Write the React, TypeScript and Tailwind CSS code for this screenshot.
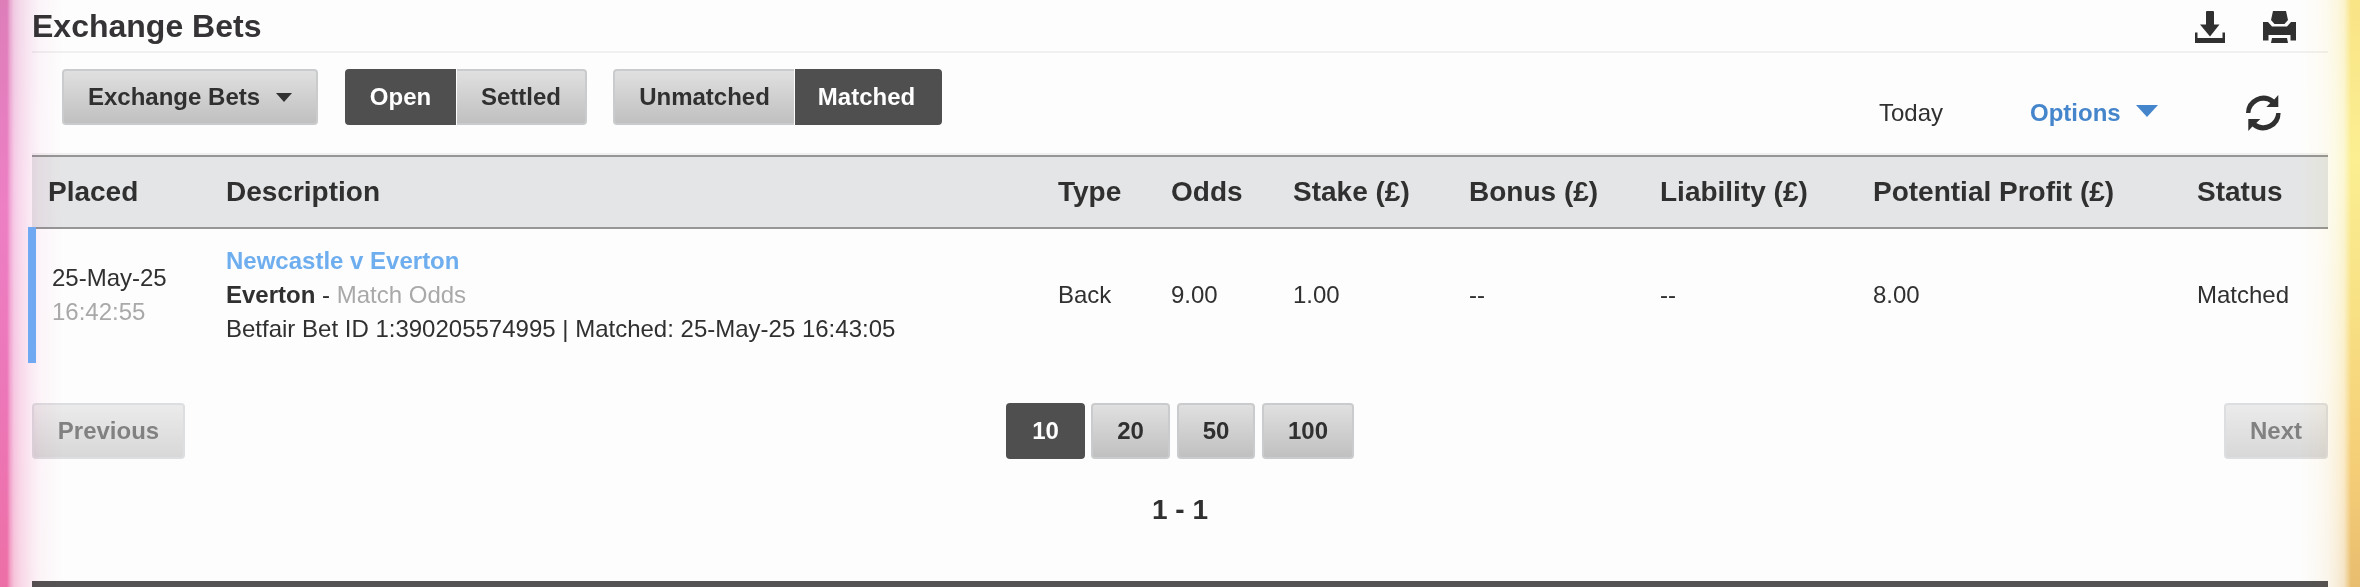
import clsx from "clsx";

const BUTTON = "flex h-14 items-center text-2xl font-bold";
const IDLE =
  "border-2 border-[#c9cbcd] bg-gradient-to-b from-[#e0e0e0] to-[#c0c0c0] text-[#303030]";
const ACTIVE = "bg-[#4f4f4f] text-white";

const COLUMNS =
  "grid grid-cols-[178px_832px_113px_122px_176px_191px_213px_324px_auto]";

const headers = [
  "Placed",
  "Description",
  "Type",
  "Odds",
  "Stake (£)",
  "Bonus (£)",
  "Liability (£)",
  "Potential Profit (£)",
  "Status",
];

const bet = {
  date: "25-May-25",
  time: "16:42:55",
  event: "Newcastle v Everton",
  selection: "Everton",
  market: "Match Odds",
  details: "Betfair Bet ID 1:390205574995 | Matched: 25-May-25 16:43:05",
  values: ["Back", "9.00", "1.00", "--", "--", "8.00", "Matched"],
};

const pageSizes = [
  { label: "10", className: "w-[79px]" },
  { label: "20", className: "ml-1.5 w-[79px]" },
  { label: "50", className: "ml-[7px] w-[78px]" },
  { label: "100", className: "ml-[7px] w-[92px]" },
];

function DownloadIcon() {
  return (
    <svg className="h-8 w-[30px]" viewBox="0 0 30 32" fill="#303030">
      <path d="M12 0h6q1 0 1 1v12.5h5.5L15 25.5 5 13.5h6V1q0-1 1-1z" />
      <path d="M0 21.5h2.5V27h25v-5.5H30V32H0z" />
    </svg>
  );
}

function PrintIcon() {
  return (
    <svg className="h-8 w-[33px]" viewBox="0 0 33 32" fill="#303030">
      <path d="M10 0h13l2 9-3.5 4h-10L8 9z" />
      <path d="M0 11h5l4 4.5h15l4-4.5h5v18.5h-5.5V24h-22v5.5H0z" />
      <path d="M9 27h15l1 5H8z" />
    </svg>
  );
}

function RefreshIcon() {
  return (
    <svg className="h-9 w-[35px]" viewBox="0 0 35 36" fill="#303030">
      <path d="M0 18A17.3 17.3 0 0 1 28.2 4.6L32.3 0v12H20.3l4-4.1A12.9 12.9 0 0 0 4.4 18z" />
      <path d="M34.6 18A17.3 17.3 0 0 1 6.4 31.4L2.3 36V24h12l-4 4.1A12.9 12.9 0 0 0 30.2 18z" />
    </svg>
  );
}

function Toolbar() {
  return (
    <div className="flex h-[102px] items-start border-b-2 border-[#f0f0f0] pt-4 pl-[30px]">
      <button className={clsx(BUTTON, IDLE, "w-64 rounded-[4px] pl-6")}>
        Exchange Bets
        <svg className="ml-4 h-[9px] w-4" viewBox="0 0 16 9" fill="#303030">
          <path d="M0 0h16L8 9z" />
        </svg>
      </button>

      <div className="ml-[27px] flex gap-px">
        <button className={clsx(BUTTON, ACTIVE, "w-[111px] justify-center rounded-l-[4px]")}>
          Open
        </button>
        <button className={clsx(BUTTON, IDLE, "w-[130px] justify-center rounded-r-[4px] border-l-0")}>
          Settled
        </button>
      </div>

      <div className="ml-[26px] flex gap-px">
        <button className={clsx(BUTTON, IDLE, "w-[181px] justify-center rounded-l-[4px] border-r-0")}>
          Unmatched
        </button>
        <button
          className={clsx(BUTTON, ACTIVE, "w-[147px] justify-center rounded-r-[4px] pr-1")}
        >
          Matched
        </button>
      </div>

      <div className="mt-[26px] mr-[47px] ml-auto flex items-start text-2xl leading-9 text-[#303030]">
        <span className="w-[151px] whitespace-nowrap">Today</span>
        <span className="w-[106px] font-bold text-[#4585cb]">Options</span>
        <svg className="mt-[10px] h-3 w-[22px]" viewBox="0 0 22 12" fill="#4585cb">
          <path d="M0 0h22L11 12z" />
        </svg>
        <span className="ml-[88px]">
          <RefreshIcon />
        </span>
      </div>
    </div>
  );
}

function BetsTable() {
  return (
    <div className="text-2xl text-[#303030]">
      <div
        className={clsx(
          COLUMNS,
          "h-[74px] items-center border-y-2 border-[#969696] bg-[#e4e5e6] pl-4 text-[28px] font-bold",
        )}
      >
        {headers.map((header) => (
          <span key={header} className="whitespace-nowrap">
            {header}
          </span>
        ))}
      </div>

      {/* The marker runs up over the header's bottom rule and stays clear of the glow */}
      <div
        className={clsx(
          COLUMNS,
          "relative z-10 -mt-0.5 -ml-1 h-[136px] items-center border-l-8 border-[#70a8f2] pl-3",
        )}
      >
        <div className="pl-1 leading-[34px]">
          <p>{bet.date}</p>
          <p className="text-[#a9a9a9]">{bet.time}</p>
        </div>
        <div className="leading-[34px] whitespace-nowrap">
          <p className="font-bold text-[#6eaeef]">{bet.event}</p>
          <p>
            <b>{bet.selection}</b> - <span className="text-[#a9a9a9]">{bet.market}</span>
          </p>
          <p>{bet.details}</p>
        </div>
        {bet.values.map((value, i) => (
          <span key={i}>{value}</span>
        ))}
      </div>
    </div>
  );
}

function Pagination() {
  return (
    <div className="mt-10 grid grid-cols-3 items-start text-[#303030]">
      <button
        disabled
        className={clsx(BUTTON, IDLE, "w-[153px] justify-center rounded-[4px] opacity-60")}
      >
        Previous
      </button>
      <div className="flex justify-center">
        {pageSizes.map((size, i) => (
          <button
            key={size.label}
            className={clsx(
              BUTTON,
              i === 0 ? ACTIVE : IDLE,
              "justify-center rounded-[4px]",
              size.className,
            )}
          >
            {size.label}
          </button>
        ))}
      </div>
      <button
        disabled
        className={clsx(
          BUTTON,
          IDLE,
          "w-[104px] justify-center justify-self-end rounded-[4px] opacity-60",
        )}
      >
        Next
      </button>
      <p className="col-start-2 mt-[33px] text-center text-[28px] leading-9 font-bold">1 - 1</p>
    </div>
  );
}

export default function App() {
  return (
    <div className="relative isolate flex h-[587px] w-[2360px] flex-col overflow-hidden bg-[#fdfdfd] px-8 font-['Liberation_Sans',Arial,sans-serif]">
      <header className="flex h-[53px] shrink-0 items-start justify-between border-b-2 border-[#f0f0f0]">
        <h1 className="mt-2 text-[32px] leading-9 font-bold text-[#353335]">Exchange Bets</h1>
        <div className="mt-[11px] mr-8 flex gap-[38px]">
          <DownloadIcon />
          <PrintIcon />
        </div>
      </header>
      <Toolbar />
      <BetsTable />
      <Pagination />
      <div className="mt-auto h-1.5 bg-[#555354]" />

      {/* Coloured glow along both window edges */}
      <div className="pointer-events-none absolute inset-y-0 left-0 w-[70px] bg-[linear-gradient(180deg,#df7fbb,#ef80c6_35%,#ee78bb_65%,#ef70a8)] mix-blend-multiply [mask-image:linear-gradient(90deg,#000_0,#000_7px,#000a_10px,#0006_14px,#0004_21px,#0002_32px,#0001_40px,transparent_62px)]" />
      <div className="pointer-events-none absolute inset-y-0 right-0 w-[60px] bg-[linear-gradient(180deg,#fbe687,#fdf193_27%,#fae386_52%,#f7cf78_80%,#eabf70)] mix-blend-multiply [mask-image:linear-gradient(270deg,#000_0,#000_9px,#000b_12px,#0006_16px,#0004_22px,#0002_32px,#0001_42px,transparent_60px)]" />
    </div>
  );
}
